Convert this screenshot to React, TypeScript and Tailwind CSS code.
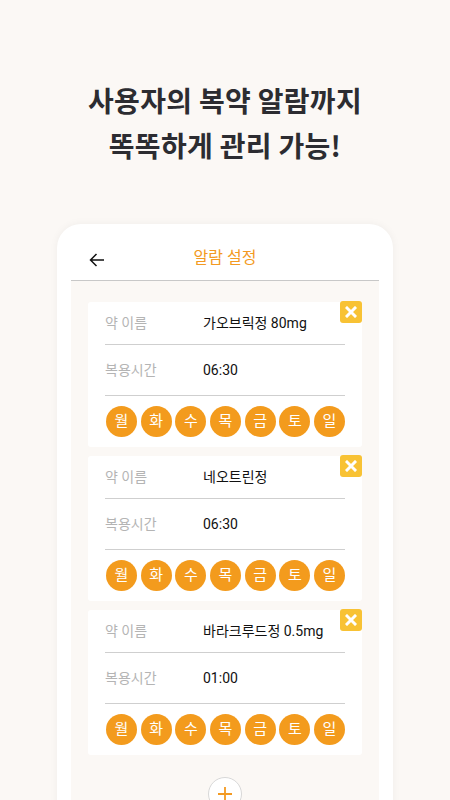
import React from "react";

const days = ["월", "화", "수", "목", "금", "토", "일"];

const meds = [
  { name: "가오브릭정 80mg", time: "06:30" },
  { name: "네오트린정", time: "06:30" },
  { name: "바라크루드정 0.5mg", time: "01:00" },
];

function MedCard({ name, time }: { name: string; time: string }) {
  return (
    <div className="relative bg-white rounded-[3px] px-[17px]">
      <div className="absolute right-0 top-[-1px] w-[22px] h-[22px] bg-[#f8c234] rounded-[3px] flex items-center justify-center">
        <svg width="12" height="12" viewBox="0 0 12 12">
          <path d="M2 2 L10 10 M10 2 L2 10" stroke="white" strokeWidth="3" strokeLinecap="square" />
        </svg>
      </div>
      <div className="h-[43px] flex items-center border-b border-[#cfcfcf] text-[14px]">
        <span className="w-[98px] text-[#b4b4b4]">약 이름</span>
        <span className="text-[#111]">{name}</span>
      </div>
      <div className="h-[51px] flex items-center border-b border-[#cfcfcf] text-[14px]">
        <span className="w-[98px] text-[#b4b4b4]">복용시간</span>
        <span className="text-[#111]">{time}</span>
      </div>
      <div className="flex justify-between pt-[10px] pb-[10px] pl-[1px]">
        {days.map((d) => (
          <div
            key={d}
            className="w-[31px] h-[31px] rounded-full bg-[#f39b1d] text-white text-[15px] flex items-center justify-center leading-none"
          >
            {d}
          </div>
        ))}
      </div>
    </div>
  );
}

export default function App() {
  return (
    <div
      className="w-[450px] h-[800px] overflow-hidden bg-[#fbf8f5] flex flex-col items-center"
      style={{ fontFamily: "Roboto, 'Noto Sans CJK KR', sans-serif" }}
    >
      <div
        className="pt-[78px] text-center text-[28px] leading-[45px] font-bold text-[#2c2c31] tracking-[0.3px]"
        style={{ fontFamily: "'Noto Sans CJK KR', sans-serif" }}
      >
        <div>사용자의 복약 알람까지</div>
        <div>똑똑하게 관리 가능!</div>
      </div>
      <div className="mt-[56px] w-[336px] flex-1 bg-white rounded-t-[24px] px-[14px] shadow-[0_0_8px_rgba(0,0,0,0.05)] flex flex-col">
        <div className="h-[57px] grid grid-cols-3 items-center pt-[12px] border-b border-[#c8c8c8]">
          <div className="pl-[18px] pt-[3px]">
            <svg width="16" height="14" viewBox="0 0 16 14" fill="none">
              <path d="M15 7 H1.5 M7.5 1 L1.5 7 L7.5 13" stroke="#111" strokeWidth="1.5" />
            </svg>
          </div>
          <div className="text-center text-[16px] text-[#f39a22]">알람 설정</div>
          <div />
        </div>
        <div className="flex-1 bg-[#fbf8f5] px-[17px] pt-[21px] flex flex-col gap-[9px]">
          {meds.map((m) => (
            <MedCard key={m.name} name={m.name} time={m.time} />
          ))}
          <div className="flex justify-center pt-[13px]">
            <div className="w-[34px] h-[34px] rounded-full bg-white border border-[#d8d8d8] flex items-center justify-center">
              <svg width="16" height="16" viewBox="0 0 16 16">
                <path d="M8 1 V15 M1 8 H15" stroke="#f39a22" strokeWidth="1.8" />
              </svg>
            </div>
          </div>
        </div>
      </div>
    </div>
  );
}
